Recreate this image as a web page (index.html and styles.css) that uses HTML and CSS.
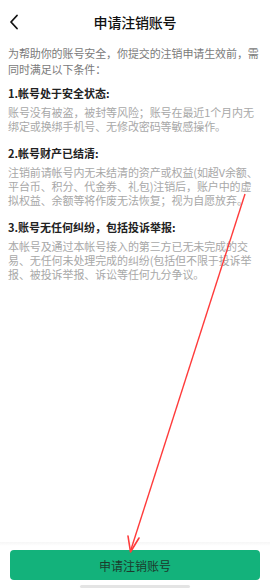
FILE: index.html
```html
<!DOCTYPE html>
<html lang="zh">
<head>
<meta charset="utf-8">
<link rel="stylesheet" href="styles.css">
</head>
<body>
<div class="page">
  <header class="topbar">
    <svg class="back" width="10" height="16" viewBox="0 0 10 16"><path d="M8 1.5 L2 8 L8 14.5" fill="none" stroke="#111" stroke-width="1.8" stroke-linecap="round" stroke-linejoin="round"/></svg>
    <div class="title">申请注销账号</div>
  </header>
  <main class="content">
    <p class="intro">为帮助你的账号安全，你提交的注销申请生效前，需同时满足以下条件：</p>
    <section class="item">
      <h2>1.帐号处于安全状态:</h2>
      <p>账号没有被盗，被封等风险；账号在最近1个月内无绑定或换绑手机号、无修改密码等敏感操作。</p>
    </section>
    <section class="item">
      <h2>2.帐号财产已结清:</h2>
      <p>注销前请帐号内无未结清的资产或权益(如超V余额、平台币、积分、代金券、礼包)注销后，账户中的虚拟权益、余额等将作废无法恢复；视为自愿放弃。</p>
    </section>
    <section class="item">
      <h2>3.账号无任何纠纷，包括投诉举报:</h2>
      <p>本帐号及通过本帐号接入的第三方已无未完成的交易、无任何未处理完成的纠纷(包括但不限于投诉举报、被投诉举报、诉讼等任何九分争议。</p>
    </section>
  </main>
  <footer class="footer">
    <button class="submit">申请注销账号</button>
    <div class="home-bar"></div>
  </footer>
  <svg class="arrow" width="270" height="588" viewBox="0 0 270 588">
    <line x1="245" y1="194" x2="130.5" y2="551" stroke="#ff3b3b" stroke-width="1.4"/>
    <path d="M128 536 L130.5 552 L139 538" fill="none" stroke="#ff3b3b" stroke-width="1.6" stroke-linecap="round" stroke-linejoin="round"/>
  </svg>
</div>
</body>
</html>
```
FILE: styles.css
```css
html, body {
  margin: 0;
  padding: 0;
  background: #fff;
}
body {
  font-family: "Noto Sans CJK SC", "Noto Sans", sans-serif;
  color: #222;
}
.page {
  position: relative;
  width: 270px;
  height: 588px;
  overflow: hidden;
  display: flex;
  flex-direction: column;
}
.topbar {
  position: relative;
  height: 44px;
  display: flex;
  align-items: center;
  justify-content: center;
}
.back {
  position: absolute;
  left: 9px;
  top: 14px;
}
.title {
  font-size: 14px;
  font-weight: 500;
  color: #111;
  letter-spacing: -0.2px;
}
.content {
  flex: 1;
  padding: 1px 8px 0;
}
.content p {
  margin: 0;
  font-size: 11px;
  letter-spacing: -0.1px;
}
.intro {
  color: #7a7a7a;
  line-height: 16px;
}
.item {
  margin-top: 12px;
}
.item:first-of-type {
  margin-top: 8px;
}
.item h2 {
  margin: 0 0 4px;
  font-size: 11px;
  line-height: 16px;
  font-weight: 700;
  color: #222;
}
.content .item p {
  color: #a8a8a8;
  line-height: 14px;
}
.footer {
  height: 46px;
  background: linear-gradient(#f6f6f6, #fff 4px);
  display: flex;
  flex-direction: column;
  align-items: center;
  padding-top: 8px;
  box-sizing: border-box;
}
.submit {
  width: 250px;
  height: 32px;
  border: none;
  border-radius: 4px;
  background: #13b27b;
  color: #1c3a2c;
  font-family: inherit;
  font-size: 12px;
  padding: 0;
}
.home-bar {
  margin-top: 5px;
  width: 110px;
  height: 3px;
  border-radius: 2px;
  background: #e4e4e4;
}
.arrow {
  position: absolute;
  left: 0;
  top: 0;
  pointer-events: none;
}
```
